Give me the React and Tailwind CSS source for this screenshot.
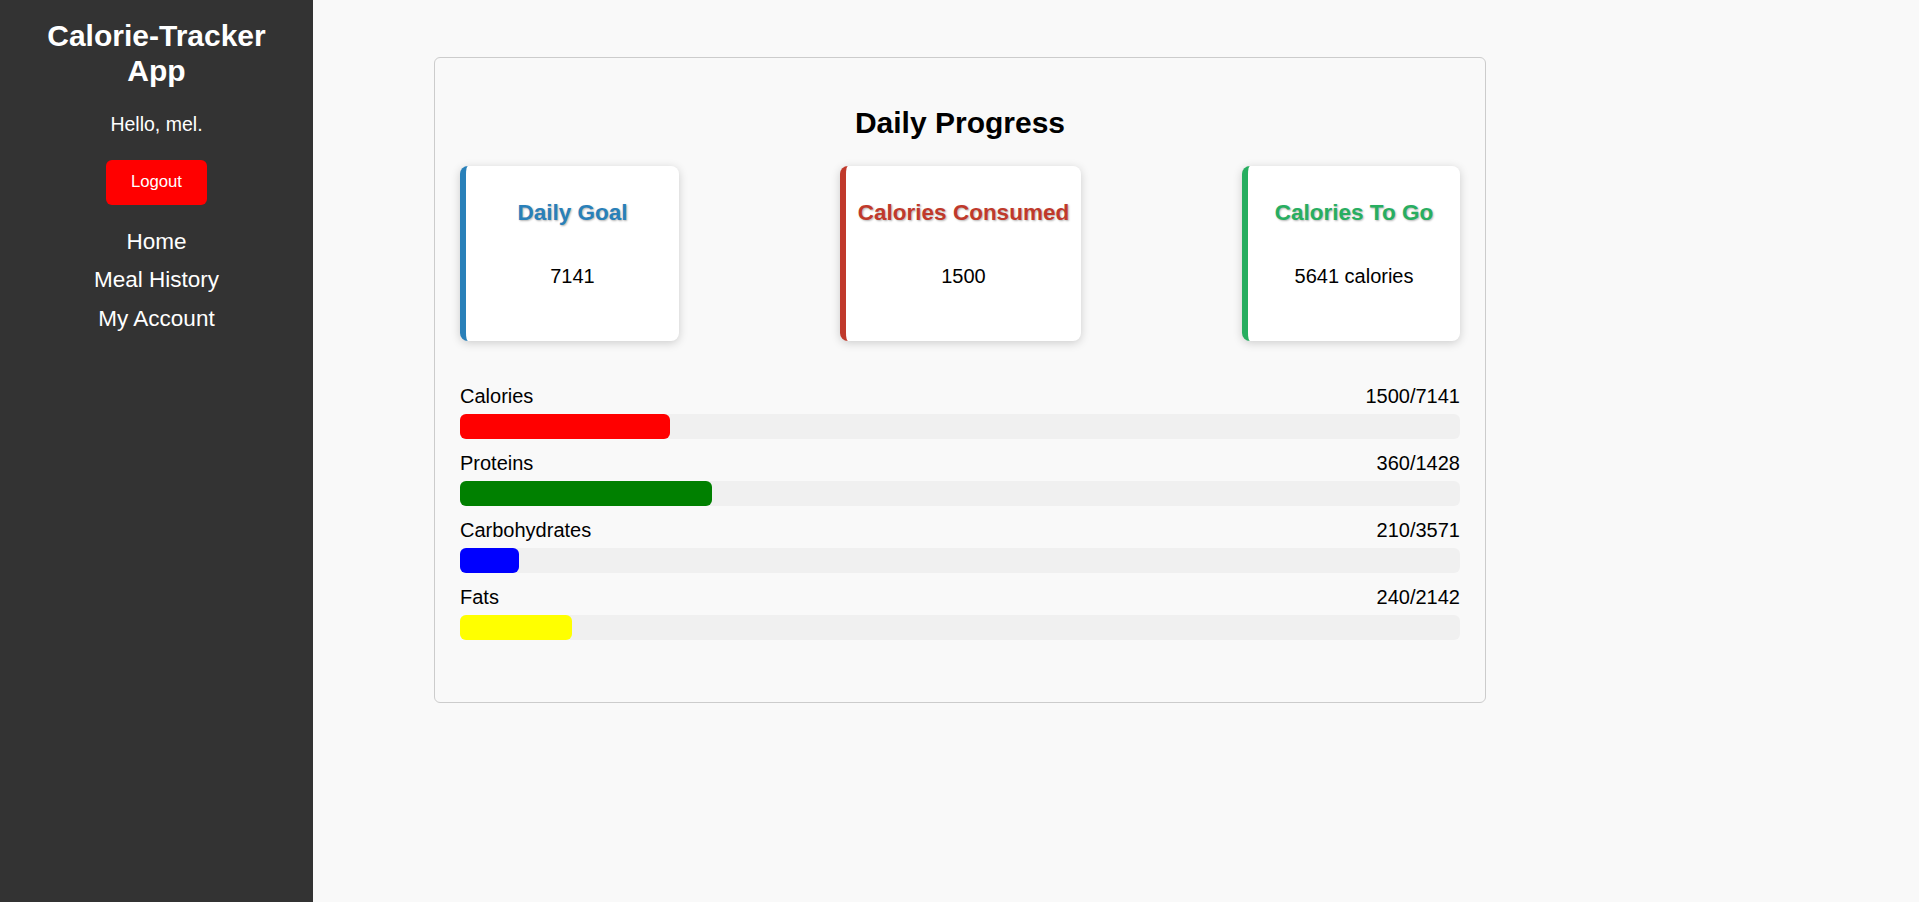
import React from "react";

const stats = [
  { title: "Daily Goal", value: "7141", w: "w-[219px]", border: "border-l-[#2980b9]", text: "text-[#2980b9]" },
  { title: "Calories Consumed", value: "1500", w: "w-[241px]", border: "border-l-[#c0392b]", text: "text-[#c0392b]" },
  { title: "Calories To Go", value: "5641 calories", w: "w-[218px]", border: "border-l-[#27ae60]", text: "text-[#27ae60]" },
];

const bars = [
  { label: "Calories", cur: 1500, max: 7141, color: "bg-[#ff0000]" },
  { label: "Proteins", cur: 360, max: 1428, color: "bg-[#008000]" },
  { label: "Carbohydrates", cur: 210, max: 3571, color: "bg-[#0000ff]" },
  { label: "Fats", cur: 240, max: 2142, color: "bg-[#ffff00]" },
];

export default function App() {
  return (
    <div
      className="flex min-h-screen bg-[#f9f9f9] text-black"
      style={{ fontFamily: '"Liberation Sans", Arial, sans-serif' }}
    >
      <aside className="w-[313px] shrink-0 bg-[#333333] px-[25px] pt-[19px] text-white flex flex-col items-center text-center min-h-[902px]">
        <h1 className="text-[30px] font-bold leading-[34.5px]">Calorie-Tracker App</h1>
        <p className="mt-[24.5px] text-[19.5px] leading-[22.5px]">Hello, mel.</p>
        <button className="mt-[24.5px] h-[45px] w-[101px] rounded-[6px] bg-[#ff0000] text-[16.7px] text-white">
          Logout
        </button>
        <nav className="mt-[24px] flex flex-col items-center gap-[12.5px] text-[22.5px] leading-[26px]">
          <a>Home</a>
          <a>Meal History</a>
          <a>My Account</a>
        </nav>
      </aside>

      <main className="flex-1">
        <div className="ml-[121px] mt-[57px] w-[1052px] rounded-[6px] border border-[#cccccc] bg-[#f9f9f9] px-[25px] pt-[47px] pb-[62px]">
          <h2 className="text-center text-[30px] font-bold leading-[35px]">Daily Progress</h2>

          <div className="mt-[26px] flex justify-between">
            {stats.map((s) => (
              <div
                key={s.title}
                className={`${s.w} h-[175px] rounded-[8px] border-l-[6px] ${s.border} bg-white shadow-[0_2px_10px_rgba(0,0,0,0.18)] flex flex-col items-center pt-[34px]`}
              >
                <div className={`text-[22.5px] font-bold leading-[26px] whitespace-nowrap ${s.text} [text-shadow:1px_1px_2px_rgba(0,0,0,0.3)]`}>
                  {s.title}
                </div>
                <div className="mt-[39px] text-[20px] leading-[23px]">{s.value}</div>
              </div>
            ))}
          </div>

          <div className="mt-[44px] flex flex-col gap-[13px]">
            {bars.map((b) => (
              <div key={b.label}>
                <div className="flex justify-between text-[20px] leading-[23px] mb-[6px]">
                  <span>{b.label}</span>
                  <span>
                    {b.cur}/{b.max}
                  </span>
                </div>
                <div className="h-[25px] w-full rounded-[6px] bg-[#f0f0f0]">
                  <div
                    className={`h-full rounded-[6px] ${b.color}`}
                    style={{ width: `${(b.cur / b.max) * 100}%` }}
                  />
                </div>
              </div>
            ))}
          </div>
        </div>
      </main>
    </div>
  );
}
